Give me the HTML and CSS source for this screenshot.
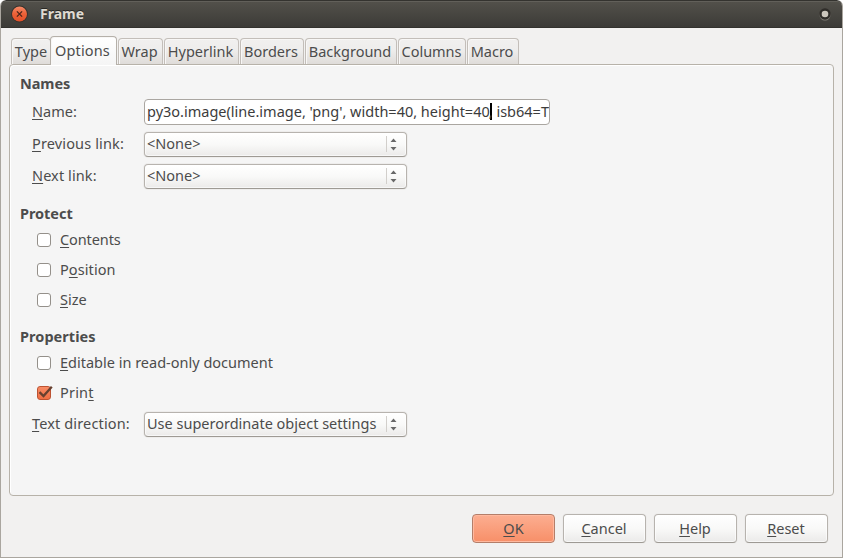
FILE: index.html
```html
<!DOCTYPE html>
<html lang="en">
<head>
<meta charset="utf-8">
<title>Frame</title>
<link rel="stylesheet" href="styles.css">
</head>
<body>
<div class="window">
  <header class="titlebar">
    <svg class="close" width="18" height="18" viewBox="0 0 18 18">
      <defs><linearGradient id="orange" x1="0" y1="0" x2="0" y2="1"><stop offset="0" stop-color="#f58a68"/><stop offset=".5" stop-color="#ec6036"/><stop offset="1" stop-color="#e4512a"/></linearGradient></defs>
      <circle cx="8.500" cy="9" r="8.400" fill="#35322d"/>
      <circle cx="8.500" cy="9" r="7.500" fill="url(#orange)"/>
      <path d="M5.900 6.400l5.200 5.200M11.100 6.400l-5.200 5.200" stroke="#4b2519" stroke-width="1.300"/>
    </svg>
    <h1>Frame</h1>
    <svg class="dot" width="14" height="14" viewBox="0 0 14 14">
      <circle cx="7" cy="8" r="5.500" fill="#85827a"/>
      <circle cx="7" cy="7" r="5.700" fill="#2f2d29"/>
      <circle cx="7" cy="7" r="3.300" fill="#cbc6bc"/>
    </svg>
  </header>
  <nav class="tabs">
    <div class="tab type"><span>Type</span></div>
    <div class="tab options active"><span>Options</span></div>
    <div class="tab wrap"><span>Wrap</span></div>
    <div class="tab hyperlink"><span>Hyperlink</span></div>
    <div class="tab borders"><span>Borders</span></div>
    <div class="tab background"><span>Background</span></div>
    <div class="tab columns"><span>Columns</span></div>
    <div class="tab macro"><span>Macro</span></div>
  </nav>
  <main class="panel">
    <h2>Names</h2>
    <div class="row"><label class="t-name"><u>N</u>ame:</label><div class="input"><span class="before">py3o.image(line.image, 'png', width=40, height=40</span><i class="caret"></i><span class="after">, isb64=T</span></div></div>
    <div class="row"><label class="t-prev"><u>P</u>revious link:</label><div class="select"><span class="t-none">&lt;None&gt;</span><svg class="arrows" width="20" height="18" viewBox="0 0 20 18"><path d="M.5 1v16" stroke="#d2cfcb"/><path d="M4.500 7L7.500 3.600 10.500 7zM4.500 12L7.500 15.400 10.500 12z" fill="#686868"/></svg></div></div>
    <div class="row"><label class="t-next"><u>N</u>ext link:</label><div class="select"><span class="t-none">&lt;None&gt;</span><svg class="arrows" width="20" height="18" viewBox="0 0 20 18"><path d="M.5 1v16" stroke="#d2cfcb"/><path d="M4.500 7L7.500 3.600 10.500 7zM4.500 12L7.500 15.400 10.500 12z" fill="#686868"/></svg></div></div>
    <h2 class="protect">Protect</h2>
    <div class="check"><i class="box"></i><span class="t-contents"><u>C</u>ontents</span></div>
    <div class="check"><i class="box"></i><span class="t-position">P<u>o</u>sition</span></div>
    <div class="check"><i class="box"></i><span class="t-size"><u>S</u>ize</span></div>
    <h2 class="properties">Properties</h2>
    <div class="check"><i class="box"></i><span class="t-edit"><u>E</u>ditable in read-only document</span></div>
    <div class="check"><i class="box checked"><svg width="17" height="15" viewBox="0 0 17 15"><path d="M2.500 7.200l4 3.800L14.800 1.800" fill="none" stroke="#67402f" stroke-width="2.300"/></svg></i><span class="t-print">Prin<u>t</u></span></div>
    <div class="row direction"><label class="t-dir"><u>T</u>ext direction:</label><div class="select"><span class="t-super">Use superordinate object settings</span><svg class="arrows" width="20" height="18" viewBox="0 0 20 18"><path d="M.5 1v16" stroke="#d2cfcb"/><path d="M4.500 7L7.500 3.600 10.500 7zM4.500 12L7.500 15.400 10.500 12z" fill="#686868"/></svg></div></div>
  </main>
  <footer class="buttons">
    <div class="button primary"><span><u>O</u>K</span></div>
    <div class="button"><span class="t-cancel"><u>C</u>ancel</span></div>
    <div class="button"><span class="t-help"><u>H</u>elp</span></div>
    <div class="button"><span class="t-reset"><u>R</u>eset</span></div>
  </footer>
</div>
</body>
</html>
```
FILE: styles.css
```css
* { box-sizing: border-box; }
body { margin: 0; background: #fff; font: 14.5px/20px "Noto Sans", "Open Sans", sans-serif; color: #4c4c4c; white-space: nowrap; }
u { text-decoration-thickness: 1px; text-underline-offset: 2px; text-decoration-skip-ink: none; }
.window { width: 843px; height: 558px; background: #f2f1f0; border: 1px solid #aaa69f; border-top: 0; border-radius: 6px 6px 0 0; overflow: hidden; display: flex; flex-direction: column; }
.titlebar { flex: none; height: 28px; margin: 0 -1px; padding: 0 11px 0 11px; display: flex; align-items: center; background: linear-gradient(#53514b, #3c3b37); border-top: 1px solid #34332f; border-bottom: 1px solid #33322e; border-radius: 6px 6px 0 0; box-shadow: inset 0 1px #62605a; }
.titlebar h1 { margin: 0 auto 0 11px; font-size: 14px; font-weight: 700; color: #dfdbd2; text-shadow: 0 -1px #292824; }
.tabs { flex: none; height: 36px; margin-left: 10px; display: flex; align-items: flex-end; z-index: 1; }
.tab { height: 26px; display: flex; align-items: center; justify-content: center; border: 1px solid #c3beb9; border-bottom: 0; border-radius: 4px 4px 0 0; background: linear-gradient(#f1f0ef, #eeedec 45%, #dfdcd9); box-shadow: inset 1px 1px #f8f7f6; margin-right: 1px; padding-bottom: 2px; }
.tab.active { height: 29px; background: linear-gradient(#fff, #f5f5f5); margin: 0 0 -1px -2px; border-color: #b5b0a9; padding: 0 2px 2px 0; letter-spacing: .15px; }
.type { width: 40px; } .options { width: 67px; } .wrap { width: 45px; margin-left: 1px; padding-right: 2px; }
.hyperlink { width: 75px; padding-right: 2px; } .borders { width: 64px; padding-right: 2px; } .background { width: 92px; padding-right: 2px; }
.columns { width: 68px; letter-spacing: -.05px; padding-right: 1px; } .macro { width: 52px; padding-right: 2px; }
.panel { flex: none; margin: 0 8px; height: 432px; border: 1px solid #b7b2a9; border-radius: 4px; background: #f5f5f5; box-shadow: inset 1px 1px #fff; padding: 8px 10px; }
h2 { font-size: 14.5px; line-height: 20px; margin: 0 0 5px; font-weight: 700; letter-spacing: -.05px; }
.protect { margin: 16px 0 6px; }
.properties { margin: 17px 0 6px; letter-spacing: .05px; }
.row { display: grid; grid-template-columns: 112px auto; justify-content: start; align-items: center; height: 25px; margin: 0 0 7px 12px; }
.row label { padding-bottom: 2px; }
.input { width: 406px; height: 26px; margin-top: 1px; padding: 0 0 2px 2px; display: flex; align-items: center; overflow: hidden; border: 1px solid #aaa6a1; border-radius: 4px; background: #fff; color: #3c3c3c; }
.caret { width: 2px; height: 17px; margin: 0 -1px 0 0; background: #000; flex: none; }
.after { margin-left: -2px; }
.select { width: 263px; height: 25px; margin-top: 2px; padding: 0 0 3px 2px; display: flex; justify-content: space-between; align-items: center; }
.arrows { margin-top: 2px; }
.select, .button { border: 1px solid #b7b3ae; border-bottom-color: #9e9a94; border-radius: 4px; background: linear-gradient(#fff, #f9f9f8 50%, #ebeae9); box-shadow: inset 0 0 0 1px #fff9, 0 0 0 1px #eeedec; }
.check { height: 20px; margin: 0 0 10px 17px; display: flex; align-items: center; gap: 9px; }
.box { width: 14px; height: 14px; margin-top: 1px; border: 1px solid #94908a; border-radius: 3px; background: #fff; }
.box.checked { background: linear-gradient(#f88b65, #ef6e43); border-color: #bd5332; }
.box svg { display: block; margin: -2px 0 0 -1px; overflow: visible; }
.direction { margin-top: -2px; }
.t-prev, .t-dir { letter-spacing: .14px; }
.t-next { letter-spacing: .1px; }
.t-contents { letter-spacing: -.1px; }
.t-position { letter-spacing: .08px; }
.t-print { letter-spacing: .2px; }
.buttons { display: flex; justify-content: flex-end; gap: 8px; margin: 18px 14px 0 0; }
.button { width: 83px; height: 29px; padding: 0 1px 1px 0; display: flex; align-items: center; justify-content: center; }
.button.primary { padding-right: 0; background: linear-gradient(#fcae91, #f78f68); border-color: #b47e69; box-shadow: inset 0 0 0 1px #ffb99f; }
```
